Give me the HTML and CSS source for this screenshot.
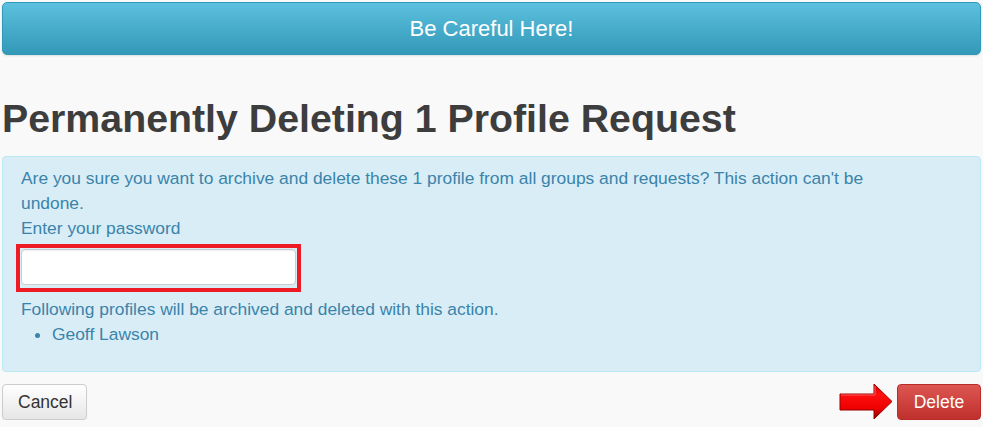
FILE: index.html
```html
<!DOCTYPE html>
<html>
<head>
<meta charset="utf-8">
<link rel="stylesheet" href="styles.css">
</head>
<body>
<div class="page">
  <div class="banner">Be Careful Here!</div>
  <h1 class="title">Permanently Deleting 1 Profile Request</h1>
  <div class="alert">
    <p class="line">Are you sure you want to archive and delete these 1 profile from all groups and requests? This action can't be undone.</p>
    <p class="line">Enter your password</p>
    <div class="highlight"><input class="field" type="password"></div>
    <p class="line following">Following profiles will be archived and deleted with this action.</p>
    <ul class="list"><li>Geoff Lawson</li></ul>
  </div>
  <div class="actions">
    <button class="btn btn-default">Cancel</button>
    <div class="right">
      <svg class="arrow" width="54" height="36" viewBox="0 0 54 36">
        <defs>
          <linearGradient id="ag" x1="0" y1="0" x2="0" y2="1">
            <stop offset="0" stop-color="#d00000"/>
            <stop offset="0.3" stop-color="#ff1010"/>
            <stop offset="0.7" stop-color="#ee0000"/>
            <stop offset="1" stop-color="#800000"/>
          </linearGradient>
        </defs>
        <polygon points="1,10 35,10 35,0 53,17.5 35,35 35,26 1,26" fill="url(#ag)" stroke="#9a0000" stroke-width="1"/>
        <polyline points="2,11 36,11 36,2" fill="none" stroke="#ff5a5a" stroke-width="1"/>
      </svg>
      <button class="btn btn-danger">Delete</button>
    </div>
  </div>
</div>
</body>
</html>
```
FILE: styles.css
```css
html, body {
  margin: 0;
  padding: 0;
  background: #f9f9f9;
}
body {
  font-family: "Liberation Sans", Arial, sans-serif;
}
.page {
  padding: 2px 2px 0 2px;
}
.banner {
  height: 53px;
  box-sizing: border-box;
  border: 1px solid #2f9ab9;
  border-radius: 5px;
  background: linear-gradient(to bottom, #5cc0de 0%, #3399b8 100%);
  color: #fff;
  font-size: 22px;
  display: flex;
  align-items: center;
  justify-content: center;
  box-shadow: 0 1px 2px rgba(0,0,0,0.12);
}
.title {
  margin: 41px 0 16px 0;
  font-size: 39.3px;
  line-height: 44px;
  font-weight: bold;
  color: #3d3d3d;
}
.alert {
  background: #d9edf7;
  border: 1px solid #bce8f1;
  border-radius: 4px;
  padding: 9px 90px 24px 18px;
  color: #3a84aa;
  font-size: 17.4px;
  line-height: 25px;
}
.line {
  margin: 0;
}
.highlight {
  display: inline-block;
  margin: 3px 0 0 -5px;
  border: 4px solid #ed1c24;
  padding: 1px 1px 3px 1px;
  line-height: 0;
}
.field {
  width: 275px;
  height: 36px;
  box-sizing: border-box;
  border: 1px solid #ccc;
  border-radius: 4px;
  background: #fff;
  box-shadow: inset 0 1px 1px rgba(0,0,0,0.075);
  margin: 0;
}
.following {
  margin-top: 5px;
}
.list {
  margin: 0;
  padding-left: 31px;
}
.actions {
  display: flex;
  justify-content: space-between;
  align-items: center;
  margin-top: 12px;
}
.right {
  display: flex;
  align-items: center;
  gap: 4px;
}
.arrow {
  display: block;
}
.btn {
  height: 36px;
  font-family: "Liberation Sans", Arial, sans-serif;
  font-size: 17.5px;
  border-radius: 4px;
  padding: 0 15px;
  cursor: pointer;
}
.btn-default {
  color: #333;
  background: linear-gradient(to bottom, #ffffff 0%, #e6e6e6 100%);
  border: 1px solid #ccc;
  box-shadow: 0 1px 1px rgba(0,0,0,0.06);
  width: 85px;
}
.btn-danger {
  color: #fff;
  background: linear-gradient(to bottom, #dc5652 0%, #c0302c 100%);
  border: 1px solid #b92c28;
  width: 84px;
}
```
